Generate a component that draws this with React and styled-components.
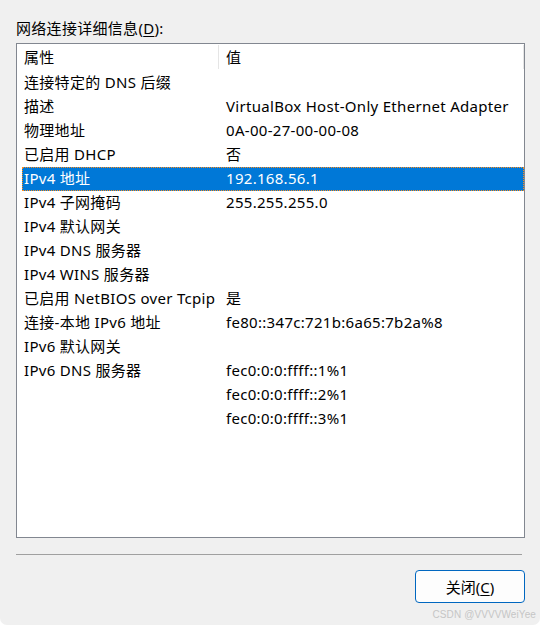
import styled, { createGlobalStyle } from "styled-components";

const GlobalStyle = createGlobalStyle`
  html, body {
    margin: 0;
    padding: 0;
    background: #ffffff;
  }
  body {
    font-family: "Noto Sans", "Noto Sans CJK SC", sans-serif;
  }
`;

const rows = [
  ["连接特定的 DNS 后缀", ""],
  ["描述", "VirtualBox Host-Only Ethernet Adapter"],
  ["物理地址", "0A-00-27-00-00-08"],
  ["已启用 DHCP", "否"],
  ["IPv4 地址", "192.168.56.1", true],
  ["IPv4 子网掩码", "255.255.255.0"],
  ["IPv4 默认网关", ""],
  ["IPv4 DNS 服务器", ""],
  ["IPv4 WINS 服务器", ""],
  ["已启用 NetBIOS over Tcpip", "是"],
  ["连接-本地 IPv6 地址", "fe80::347c:721b:6a65:7b2a%8"],
  ["IPv6 默认网关", ""],
  ["IPv6 DNS 服务器", "fec0:0:0:ffff::1%1"],
  ["", "fec0:0:0:ffff::2%1"],
  ["", "fec0:0:0:ffff::3%1"],
];

function App() {
  return (
    <>
      <GlobalStyle />
      <Dialog>
        <Label>
          网络连接详细信息(<u>D</u>):
        </Label>
        <ListBox>
          <Header>
            <HeadCell>属性</HeadCell>
            <HeadCell>值</HeadCell>
          </Header>
          {rows.map(([name, value, selected], i) => (
            <Row key={i} $selected={selected}>
              <Cell>{name}</Cell>
              <Cell>{value}</Cell>
            </Row>
          ))}
        </ListBox>
        <Separator />
        <Footer>
          <Button>
            关闭(<u>C</u>)
          </Button>
        </Footer>
        <Watermark>CSDN @VVVVWeiYee</Watermark>
      </Dialog>
    </>
  );
}

const Dialog = styled.div`
  width: 540px;
  height: 625px;
  box-sizing: border-box;
  background: #f0f0f0;
  border-radius: 0 0 7px 7px;
  padding: 17px 16px 0 16px;
  display: flex;
  flex-direction: column;
  color: #000;
  font-size: 15px;
  letter-spacing: 0.3px;
  position: relative;
  overflow: hidden;
`;

const Label = styled.div`
  height: 22px;
  line-height: 22px;
  margin-bottom: 4px;
  u {
    text-decoration-thickness: 1px;
    text-underline-offset: 2px;
  }
`;

const ListBox = styled.div`
  width: 509px;
  height: 495px;
  box-sizing: border-box;
  border: 1px solid #828790;
  background: #ffffff;
`;

const Header = styled.div`
  display: grid;
  grid-template-columns: 202px 1fr;
  height: 27px;
`;

const HeadCell = styled.div`
  padding-left: 7px;
  border-right: 1px solid #e5e5e5;
  margin: 1px 0 2px;
  line-height: 24px;
  white-space: nowrap;
`;

const Row = styled.div`
  display: grid;
  grid-template-columns: 202px 1fr;
  height: 24px;
  margin: 0 0 0 5px;
  box-sizing: border-box;
  background: ${(p) => (p.$selected ? "#0078d7" : "transparent")};
  color: ${(p) => (p.$selected ? "#ffffff" : "#000000")};
  outline: ${(p) => (p.$selected ? "1px dotted #ff8c1a" : "none")};
  outline-offset: -1px;
`;

const Cell = styled.div`
  line-height: 23px;
  padding-left: 2px;
  white-space: nowrap;
  overflow: hidden;
`;

const Separator = styled.div`
  width: 506px;
  height: 1px;
  background: #a0a0a0;
  margin-top: 16px;
`;

const Footer = styled.div`
  display: flex;
  justify-content: flex-end;
  padding-top: 15px;
`;

const Button = styled.button`
  width: 110px;
  height: 33px;
  box-sizing: border-box;
  border: 1px solid #0067c0;
  border-radius: 4px;
  background: #fdfdfd;
  font-family: "Noto Sans", "Noto Sans CJK SC", sans-serif;
  font-size: 15px;
  color: #000;
  margin-right: -1px;
  padding: 0;
  u {
    text-decoration-thickness: 1px;
    text-underline-offset: 2px;
  }
`;

const Watermark = styled.div`
  position: absolute;
  right: 4px;
  bottom: 5px;
  font-family: "Liberation Sans", sans-serif;
  font-size: 10px;
  color: #c6c6c6;
  letter-spacing: 0.1px;
`;

export default App;
